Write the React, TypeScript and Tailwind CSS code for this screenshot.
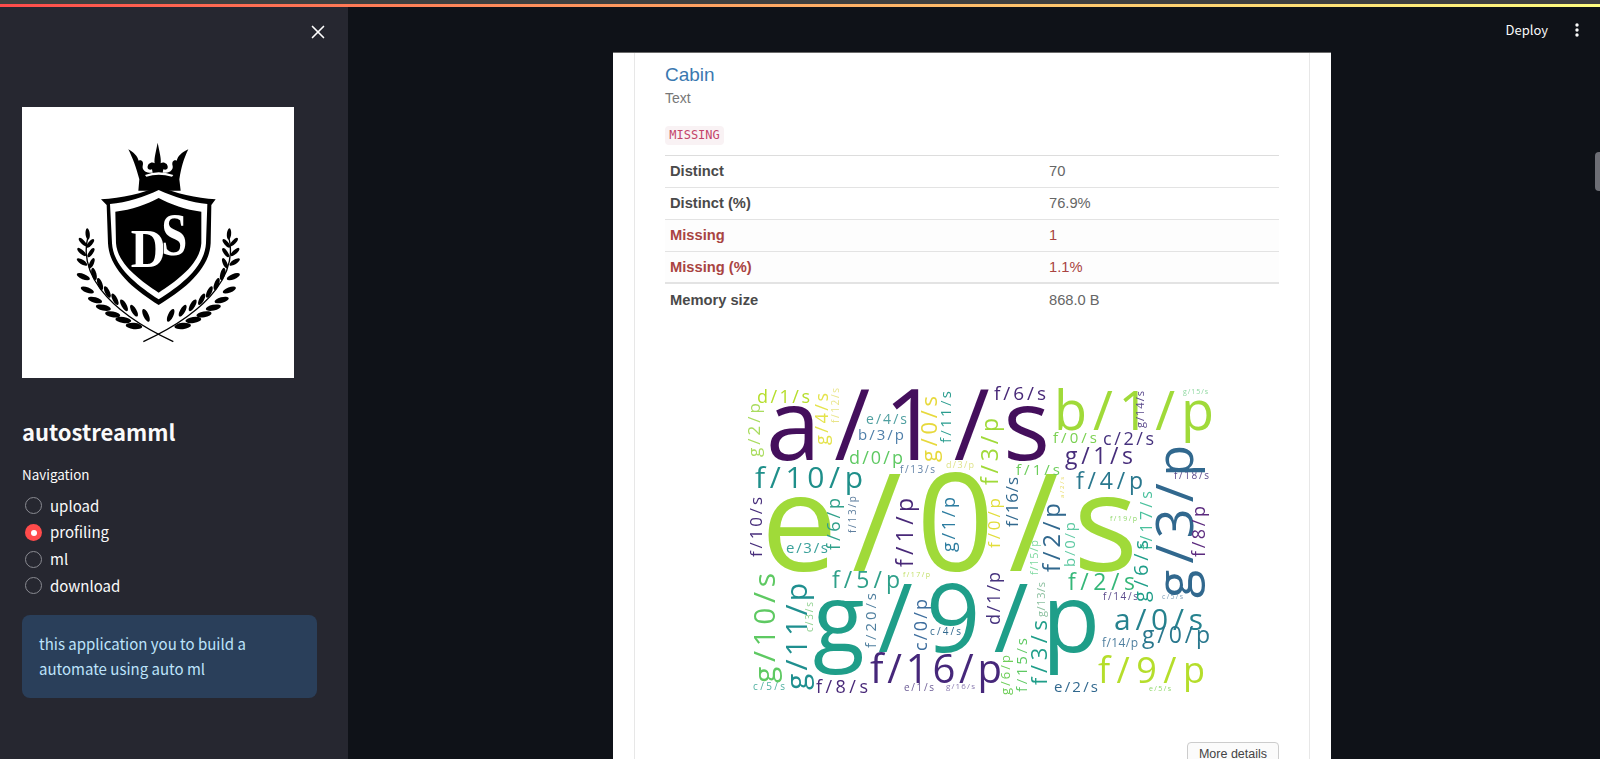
import { X } from "lucide-react";

type W = [string, number, number, number, string, number, number?];
// text, x, baseline y, font size, colour, length, rotated
const words: W[] = [
  ["a/1/s", 766, 460, 98, "#440f5c", 284],
  ["b/1/p", 1054, 430, 54, "#a0da39", 160],
  ["e/0/s", 761, 571, 136, "#a0da39", 377],
  ["g/9/p", 813, 652, 95, "#1f9e89", 287],
  ["f/16/p", 870, 683, 40, "#46277a", 132],
  ["f/9/p", 1098, 683, 36, "#b5de2b", 107],
  ["a/0/s", 1114, 630, 30, "#26828e", 89],
  ["g/0/p", 1142, 643, 23, "#2a788e", 68],
  ["f/10/p", 755, 488, 30, "#1f8f8a", 108],
  ["f/6/s", 994, 400, 19, "#482878", 52],
  ["f/0/s", 1053, 443, 15, "#7ad151", 44],
  ["c/2/s", 1103, 445, 18, "#46327e", 51],
  ["g/1/s", 1065, 464, 23, "#472d7b", 68],
  ["f/1/s", 1016, 475, 15, "#6ccd5a", 44],
  ["f/4/p", 1076, 489, 23, "#2a788e", 67],
  ["f/18/s", 1174, 479, 10, "#5b4a8c", 35],
  ["g/15/s", 1183, 394, 7, "#8fd8a0", 25],
  ["f/19/p", 1110, 521, 7, "#8fd86a", 27],
  ["f/2/s", 1068, 590, 23, "#35b779", 67],
  ["f/14/s", 1103, 600, 10, "#5b4a8c", 35],
  ["c/5/s", 1162, 599, 7, "#7f9fb8", 21],
  ["f/14/p", 1102, 647, 12, "#4f7f9f", 36],
  ["e/2/s", 1054, 692, 15, "#31688e", 44],
  ["e/5/s", 1149, 691, 7, "#8fd86a", 22],
  ["f/8/s", 816, 693, 18, "#482878", 52],
  ["c/5/s", 753, 690, 10, "#4fb0a0", 32],
  ["e/1/s", 904, 691, 10, "#6b5b95", 30],
  ["g/16/s", 946, 689, 8, "#8a7bb0", 29],
  ["f/5/p", 832, 588, 23, "#2fa08a", 68],
  ["f/17/p", 903, 577, 7, "#c3e06a", 27],
  ["e/3/s", 786, 553, 15, "#3aa19a", 42],
  ["c/4/s", 930, 635, 10, "#31688e", 31],
  ["d/0/p", 849, 464, 18, "#5ec962", 54],
  ["f/13/s", 900, 473, 10, "#6282a8", 35],
  ["d/3/p", 946, 468, 9, "#dfe38a", 28],
  ["b/3/p", 858, 440, 15, "#4f7faa", 46],
  ["e/4/s", 866, 424, 14, "#4f9fa0", 41],
  ["d/1/s", 757, 403, 18, "#b5de2b", 53],
  ["g/14/s", 1144, 428, 11, "#5b4a8c", 37, 1],
  ["f/3/p", 998, 485, 23, "#a0da39", 67, 1],
  ["f/16/s", 1018, 527, 17, "#31688e", 50, 1],
  ["f/0/p", 1000, 548, 17, "#e2dd3a", 50, 1],
  ["f/2/p", 1060, 572, 24, "#31688e", 69, 1],
  ["b/0/p", 1075, 567, 15, "#5ec9a2", 45, 1],
  ["f/17/s", 1152, 550, 16, "#4ac19d", 59, 1],
  ["g/3/p", 1193, 598, 52, "#31688e", 153, 1],
  ["f/8/p", 1205, 557, 18, "#5b2a7e", 51, 1],
  ["g/6/s", 1148, 602, 20, "#1f9e89", 62, 1],
  ["d/1/p", 1000, 625, 18, "#46327e", 53, 1],
  ["f/3/s", 1047, 685, 22, "#1f9e89", 65, 1],
  ["g/13/s", 1045, 617, 11, "#8cc0a0", 35, 1],
  ["f/15/s", 1027, 692, 15, "#5ec962", 54, 1],
  ["g/6/p", 1010, 695, 13, "#6ece58", 40, 1],
  ["f/15/p", 1038, 575, 11, "#7ed9a0", 35, 1],
  ["g/10/s", 775, 683, 30, "#5ec962", 110, 1],
  ["g/11/p", 807, 690, 30, "#1f8f8f", 107, 1],
  ["c/3/s", 813, 632, 10, "#8fd18f", 30, 1],
  ["f/20/s", 876, 648, 15, "#4f7f9f", 55, 1],
  ["c/0/p", 927, 651, 18, "#3e6e9e", 52, 1],
  ["f/6/p", 840, 550, 18, "#2fa08a", 52, 1],
  ["f/13/p", 856, 533, 10, "#5f7f9f", 37, 1],
  ["f/10/s", 762, 557, 17, "#472d7b", 60, 1],
  ["f/1/p", 913, 567, 23, "#482878", 69, 1],
  ["g/1/p", 955, 552, 18, "#2c7ca0", 55, 1],
  ["g/2/p", 760, 457, 17, "#a9dc5e", 54, 1],
  ["g/4/s", 828, 445, 18, "#e4e34a", 52, 1],
  ["f/12/s", 839, 423, 10, "#e9e58a", 35, 1],
  ["g/0/s", 937, 462, 22, "#e7d93c", 66, 1],
  ["f/11/s", 951, 443, 15, "#2a9d8f", 52, 1],
  ["a/2/s", 1064, 498, 6, "#e6d85a", 21, 1],
];

const rows = [
  ["Distinct", "70", false],
  ["Distinct (%)", "76.9%", false],
  ["Missing", "1", true],
  ["Missing (%)", "1.1%", true],
  ["Memory size", "868.0 B", false],
] as const;

const nav = ["upload", "profiling", "ml", "download"];

// cx, cy, angle, half length
const leaves: [number, number, number, number][] = [
  [83, 312, 85, 17], [68, 336, 48, 16], [91, 340, -50, 16], [65, 366, 42, 17], [93, 368, -55, 16],
  [66, 396, 32, 18], [95, 400, -65, 17], [70, 440, 22, 21], [102, 432, 75, 19], [82, 480, 22, 21],
  [120, 462, 70, 19], [105, 510, 16, 22], [142, 486, 65, 19], [130, 533, 12, 23], [165, 508, 62, 19],
  [158, 553, 10, 23], [192, 526, 60, 20], [190, 570, 8, 24], [222, 542, 60, 20], [222, 588, 6, 25],
  [258, 556, 65, 21],
];

function Laurel() {
  return (
    <g>
      <path d="M84 320C58 420 125 535 340 635" fill="none" stroke="#000" strokeWidth="4" />
      {leaves.map(([cx, cy, a, l], i) => (
        <ellipse key={i} cx={cx} cy={cy} rx={l} ry={l * 0.38} transform={`rotate(${a} ${cx} ${cy})`} fill="#000" />
      ))}
    </g>
  );
}

function Logo() {
  return (
    <svg viewBox="-114 -69 816 813" className="block w-[272px] h-[271px] bg-white blur-[0.4px]">
      <path
        d="M205 58C222 68 232 78 236 92C245 88 252 96 248 108C246 118 255 128 268 128L278 128L276 118C266 122 258 115 266 102C272 96 280 96 284 100C282 88 286 72 293 38C300 72 304 88 302 100C306 96 314 96 320 102C328 115 320 122 310 118L308 128L318 128C331 128 340 118 338 108C334 96 341 88 350 92C354 78 364 68 385 58C372 85 364 110 358 148L362 182L235 182L238 148C228 110 218 85 205 58Z"
        fill="#000"
      />
      <path d="M255 135Q295 118 340 135L336 140Q295 128 259 140Z" fill="#fff" />
      <path d="M123 208C185 205 250 190 296 168C345 190 410 205 467 208L454 225L452 340C448 420 370 480 296 525C225 480 148 420 144 340L140 225Z" fill="#000" />
      <path d="M150 222C200 218 255 200 296 180C340 200 395 218 442 222L438 340C434 410 365 465 296 508C230 465 160 410 156 340Z" fill="#fff" />
      <path d="M166 245C215 240 262 222 296 204C330 222 378 240 424 245L424 340C420 400 355 450 296 488C238 450 172 400 168 340Z" fill="#000" />
      <text x="212" y="410" fontFamily="'Liberation Serif',serif" fontWeight="700" fontSize="165" fill="#fff" textLength="105" lengthAdjust="spacingAndGlyphs">D</text>
      <text x="304" y="376" fontFamily="'Liberation Serif',serif" fontWeight="700" fontSize="186" fill="#fff" stroke="#000" strokeWidth="5" paintOrder="stroke" textLength="78" lengthAdjust="spacingAndGlyphs">S</text>
      <Laurel />
      <g transform="translate(590) scale(-1 1)">
        <Laurel />
      </g>
    </svg>
  );
}

function WordCloud() {
  return (
    <svg viewBox="730 370 490 340" className="block mt-[54px] ml-[65px] w-[490px] h-[340px] blur-[0.4px]">
      <g fontFamily="'Open Sans',sans-serif">
        {words.map(([t, x, y, fs, c, len, rot], i) => (
          <text
            key={i}
            x={x}
            y={y}
            fontSize={fs}
            fill={c}
            textLength={len}
            transform={rot ? `rotate(-90 ${x} ${y})` : undefined}
          >
            {t}
          </text>
        ))}
      </g>
    </svg>
  );
}

export default function App() {
  return (
    <div className="relative flex flex-col h-[759px] overflow-hidden bg-[#0f1218] font-['Noto_Sans_CJK_SC',sans-serif]">
      <div className="h-1 bg-[#3f3f3f] shrink-0" />
      <div className="h-[3px] bg-gradient-to-r from-[#ff4b4b] to-[#fffd80] shrink-0" />
      <div className="flex flex-1 min-h-0">
        <aside className="w-[348px] shrink-0 bg-[#262730] px-[22px]">
          <div className="flex justify-end h-[100px] pt-[14px]">
            <X size={22} strokeWidth={1.8} className="text-white mr-[-3px]" />
          </div>
          <Logo />
          <h1 className="mt-[36px] text-[22px] leading-[34px] font-semibold text-[#fafafa]">autostreamml</h1>
          <div className="mt-[16px] text-[13.4px] leading-[20px] text-[#fafafa]">Navigation</div>
          <div className="mt-[8.5px] flex flex-col">
            {nav.map((n) => (
              <div key={n} className="flex items-center h-[26.7px] pl-[3px] gap-[8px]">
                {n === "profiling" ? (
                  <span className="flex items-center justify-center w-[17px] h-[17px] rounded-full bg-[#ff4b4b]">
                    <span className="w-[6px] h-[6px] rounded-full bg-white" />
                  </span>
                ) : (
                  <span className="w-[17px] h-[17px] rounded-full border border-[#8a8b92] bg-[#262730]" />
                )}
                <span className="text-[15px] text-[#fafafa]">{n}</span>
              </div>
            ))}
          </div>
          <div className="mt-[16px] w-[295px] h-[83px] rounded-lg bg-[#2a3f5a] px-[17px] py-[16px] text-[15px] leading-[25px] text-[#bde3fb]">
            this application you to build a
            <br />
            automate using auto ml
          </div>
        </aside>
        <main className="flex-1 min-w-0 flex flex-col">
          <header className="h-[45px] shrink-0 flex items-center justify-end">
            <span className="text-[13px] text-[#fafafa] mr-[27px]">Deploy</span>
            <svg width="4" height="14" viewBox="0 0 4 14" className="mr-[21px]">
              <circle cx="2" cy="2" r="1.7" fill="#fafafa" />
              <circle cx="2" cy="7" r="1.7" fill="#fafafa" />
              <circle cx="2" cy="12" r="1.7" fill="#fafafa" />
            </svg>
          </header>
          <section className="ml-[265px] w-[718px] flex-1 min-h-0 overflow-hidden bg-white border-t border-[#6b6b6b] px-[21px] font-['Liberation_Sans',sans-serif]">
            <div className="h-full border-x border-[#e7e7e7] pl-[30px] pr-[30px]">
              <div className="pt-[10px] text-[19px] leading-[24px] text-[#3a78b0]">Cabin</div>
              <div className="mt-[1px] text-[14px] leading-[20px] text-[#777777]">Text</div>
              <div className="mt-[18px]">
                <code className="block w-[59px] h-[19px] rounded bg-[#f9f2f4] text-center font-['DejaVu_Sans_Mono',monospace] text-[12px] leading-[19px] text-[#c4456a]">
                  MISSING
                </code>
              </div>
              <div className="mt-[10px] border-t border-[#dddddd]">
                {rows.map(([k, v, warn], i) => (
                  <div
                    key={k}
                    className={`flex items-center h-[32px] pl-[5px] text-[14.7px] ${i === 3 ? "border-b-2" : i === 4 ? "" : "border-b"} border-[#e3e3e3] ${warn ? "text-[#a94442] bg-[#fdfdfd]" : "text-[#4a4a4a]"}`}
                  >
                    <span className="w-[379px] font-bold">{k}</span>
                    <span className={warn ? "text-[#a94442]" : "text-[#666666]"}>{v}</span>
                  </div>
                ))}
              </div>
              <WordCloud />
              <div className="mt-[32px] flex justify-end">
                <button className="w-[92px] h-[24px] border border-[#cccccc] rounded bg-[#fbfbfb] text-[12.5px] text-[#444444]">
                  More details
                </button>
              </div>
            </div>
          </section>
        </main>
      </div>
      <div className="absolute right-0 top-[152px] w-[5px] h-[39px] rounded-l bg-[#6d6e75]" />
    </div>
  );
}
